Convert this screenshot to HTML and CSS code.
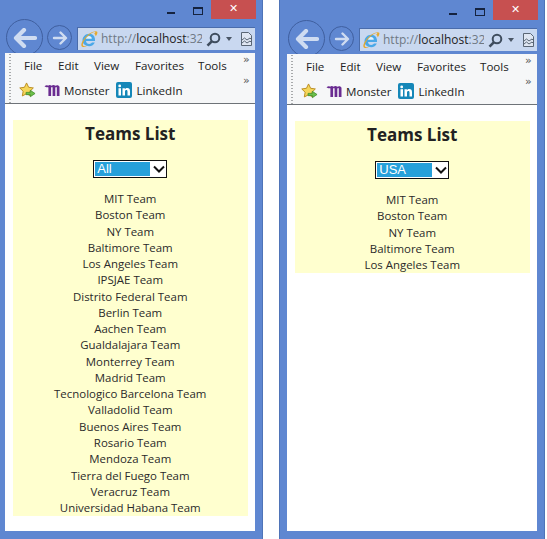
FILE: index.html
```
<!DOCTYPE html>
<html lang="en">
<head>
<meta charset="utf-8">
<title>Teams List</title>
<link rel="stylesheet" href="styles.css">
</head>
<body>
<svg class="defs" width="0" height="0" aria-hidden="true">
  <defs>
    <symbol id="ie" viewBox="0 0 18 18">
      <path d="M2.500 10.500C2.500 6.500 5.500 3.700 9.300 3.700c3.600 0 5.700 2.600 5.700 6v1.200H6c.2 1.900 1.500 3 3.200 3 1.300 0 2.200-.5 2.800-1.400h2.800c-.9 2.300-3 3.700-5.600 3.700-3.800 0-6.700-2.300-6.700-5.700z" fill="#4aa8e8"/>
      <path d="M6 8.700h5.800C11.700 7 10.600 6 9 6 7.400 6 6.200 7 6 8.700z" fill="#e4f3fc"/>
      <path d="M1.500 16C.3 13.400 5 6 10.500 3c3-1.600 5.800-2.500 6.700-1.300.6.900-.1 2.700-1.400 4.600-.3-1-.8-1.900-1.600-2.700 1-.9 1.400-1.400.9-1.600-1.100-.3-5 1.500-8.300 5C3.500 11 2.200 14.300 3.200 15.700c.7.900 2.700.4 4.600-.5-2 1.700-5.300 2.700-6.300.8z" fill="#e5a92e"/>
    </symbol>
    <symbol id="star" viewBox="0 0 18 18">
      <path d="M8 1l2.200 4.600 5 .7-3.600 3.500.9 5L8 12.400l-4.500 2.400.9-5L.8 6.300l5-.7z" fill="#f5d65a" stroke="#b98a1e"/>
      <path d="M7.500 11h4.500V8.800l5 3.400-5 3.400V13.400H7.500z" fill="#6cc04a" stroke="#3f8a2a" stroke-width=".8"/>
    </symbol>
    <symbol id="monster" viewBox="0 0 17 13">
      <path d="M.5 2.500C1.700 1.200 3 1 4 1.800 5 .9 6.500.8 7.500 1.800 8.700.8 10.300.8 11.300 1.800c1.200-1 3.700-1 4.200 1v9.200h-2.700V3.800c0-1-1.200-1-1.500 0V12H8.600V3.800c0-1-1.200-1-1.500 0V12H4.400V3.800c0-.8-.6-.9-1.100-.3z" fill="#6a2c91"/>
    </symbol>
    <symbol id="linkedin" viewBox="0 0 16 16">
      <rect width="16" height="16" rx="2" fill="#1587b8"/>
      <rect x="2.500" y="6.200" width="2.500" height="7.300" fill="#fff"/>
      <circle cx="3.700" cy="3.900" r="1.400" fill="#fff"/>
      <path d="M6.500 6.200h2.400v1.100c.5-.8 1.300-1.300 2.400-1.300 1.900 0 2.700 1.200 2.700 3.200v4.300h-2.500V9.700c0-1-.3-1.600-1.100-1.600-.9 0-1.400.6-1.400 1.700v3.700H6.500z" fill="#fff"/>
    </symbol>
    <symbol id="search" viewBox="0 0 15 15">
      <circle cx="9" cy="6" r="4.300" fill="none" stroke="#3f4d5e" stroke-width="2"/>
      <path d="M6 9.200 1.500 13.700" stroke="#3f4d5e" stroke-width="2.600"/>
    </symbol>
    <symbol id="compat" viewBox="0 0 11 14">
      <path d="M.5.500h7l3 3v10H.5z" fill="#dfe6f2" stroke="#5a6675"/>
      <path d="M1 8l2.500-2 2.500 2 3-2 1 1M1 11l2.500-2 2.500 2 3-2 1 1" fill="none" stroke="#5a6675"/>
    </symbol>
    <symbol id="back" viewBox="0 0 24 20">
      <path d="M11 2 3 10l8 8M3.500 10H22" fill="none" stroke="currentColor" stroke-width="4.200" stroke-linecap="round" stroke-linejoin="round"/>
    </symbol>
    <symbol id="forward" viewBox="0 0 16 14">
      <path d="M8.500 1.500 14 7l-5.500 5.500M13.500 7H2" fill="none" stroke="currentColor" stroke-width="2.400" stroke-linecap="round" stroke-linejoin="round"/>
    </symbol>
    <symbol id="chevron" viewBox="0 0 12 8">
      <path d="M1 1.500 6 6.500l5-5" fill="none" stroke="#111" stroke-width="2"/>
    </symbol>
  </defs>
</svg>

<section class="window window-all">
  <header class="titlebar">
    <span class="ctl-min"></span>
    <span class="ctl-max"></span>
    <span class="ctl-close">✕</span>
  </header>
  <div class="navbar">
    <span class="nav-back"><svg class="nav-back-icon"><use href="#back"/></svg></span>
    <span class="nav-forward"><svg class="nav-forward-icon"><use href="#forward"/></svg></span>
    <div class="address">
      <svg class="ie-icon"><use href="#ie"/></svg>
      <span class="url">http://<b class="host">localhost</b>:328</span>
      <svg class="search-icon"><use href="#search"/></svg>
      <span class="caret"></span>
      <svg class="compat-icon"><use href="#compat"/></svg>
    </div>
  </div>
  <div class="toolbars">
    <div class="toolbar-row menu-row">
      <span class="menu-item">File</span><span class="menu-item">Edit</span><span class="menu-item">View</span><span class="menu-item">Favorites</span><span class="menu-item">Tools</span>
      <span class="more">»</span>
    </div>
    <div class="toolbar-row fav-row">
      <svg class="star-icon"><use href="#star"/></svg>
      <svg class="monster-icon"><use href="#monster"/></svg><span class="fav-label">Monster</span>
      <svg class="linkedin-icon"><use href="#linkedin"/></svg><span class="fav-label">LinkedIn</span>
      <span class="more">»</span>
    </div>
  </div>
  <main class="client">
    <div class="panel">
      <h1 class="panel-title">Teams List</h1>
      <div class="picker"><span class="picker-value">All</span><svg class="chevron"><use href="#chevron"/></svg></div>
      <ul class="teams">
        <li>MIT Team</li><li>Boston Team</li><li>NY Team</li><li>Baltimore Team</li><li>Los Angeles Team</li><li>IPSJAE Team</li><li>Distrito Federal Team</li><li>Berlin Team</li><li>Aachen Team</li><li>Gualdalajara Team</li><li>Monterrey Team</li><li>Madrid Team</li><li>Tecnologico Barcelona Team</li><li>Valladolid Team</li><li>Buenos Aires Team</li><li>Rosario Team</li><li>Mendoza Team</li><li>Tierra del Fuego Team</li><li>Veracruz Team</li><li>Universidad Habana Team</li>
      </ul>
    </div>
  </main>
</section>

<section class="window window-usa">
  <header class="titlebar">
    <span class="ctl-min"></span>
    <span class="ctl-max"></span>
    <span class="ctl-close">✕</span>
  </header>
  <div class="navbar">
    <span class="nav-back"><svg class="nav-back-icon"><use href="#back"/></svg></span>
    <span class="nav-forward"><svg class="nav-forward-icon"><use href="#forward"/></svg></span>
    <div class="address">
      <svg class="ie-icon"><use href="#ie"/></svg>
      <span class="url">http://<b class="host">localhost</b>:328</span>
      <svg class="search-icon"><use href="#search"/></svg>
      <span class="caret"></span>
      <svg class="compat-icon"><use href="#compat"/></svg>
    </div>
  </div>
  <div class="toolbars">
    <div class="toolbar-row menu-row">
      <span class="menu-item">File</span><span class="menu-item">Edit</span><span class="menu-item">View</span><span class="menu-item">Favorites</span><span class="menu-item">Tools</span>
      <span class="more">»</span>
    </div>
    <div class="toolbar-row fav-row">
      <svg class="star-icon"><use href="#star"/></svg>
      <svg class="monster-icon"><use href="#monster"/></svg><span class="fav-label">Monster</span>
      <svg class="linkedin-icon"><use href="#linkedin"/></svg><span class="fav-label">LinkedIn</span>
      <span class="more">»</span>
    </div>
  </div>
  <main class="client">
    <div class="panel">
      <h1 class="panel-title">Teams List</h1>
      <div class="picker"><span class="picker-value">USA</span><svg class="chevron"><use href="#chevron"/></svg></div>
      <ul class="teams">
        <li>MIT Team</li><li>Boston Team</li><li>NY Team</li><li>Baltimore Team</li><li>Los Angeles Team</li>
      </ul>
    </div>
  </main>
</section>
</body>
</html>
```
FILE: styles.css
```
* { box-sizing: border-box; }
html, body { margin: 0; padding: 0; }
body {
  position: relative;
  width: 547px;
  height: 539px;
  overflow: hidden;
  background: #fff;
  font-family: "Open Sans", "Noto Sans", sans-serif;
  color: #222;
}
.defs { position: absolute; }

/* Windows sit on a free desktop canvas */
.window {
  position: absolute;
  width: 263px;
  display: flex;
  flex-direction: column;
  background: #5f87d1;
  border-right: 1px solid #4f74b8;
  padding: 0 7px 8px 5px;
}
.window-all { left: 0; top: -1px; height: 540px; }
.window-usa { left: 279px; top: 0; height: 539px; width: 266px; padding-left: 7px; padding-right: 7px; border-left: 1px solid #4f74b8; }

.titlebar {
  flex: none;
  height: 28px;
  display: flex;
  align-items: flex-start;
  justify-content: flex-end;
}
.ctl-min { width: 8px; height: 2px; margin: 13px 18px 0 0; background: #15233f; }
.ctl-max { width: 10px; height: 8px; margin: 8px 8px 0 0; border: 1px solid #15233f; border-top-width: 2px; }
.ctl-close {
  width: 45px; height: 20px;
  margin-right: -1px;
  background: #c75050;
  color: #fff;
  font: 700 11px/20px "DejaVu Sans", sans-serif;
  text-align: center;
}

.navbar {
  flex: none;
  height: 26px;
  display: flex;
  align-items: flex-start;
  position: relative;
}
.nav-back {
  flex: none;
  width: 37px; height: 37px;
  margin: -8px 0 0 1px;
  border-radius: 50%;
  border: 1px solid #3f5f9f;
  display: flex; align-items: center; justify-content: center;
  color: #cfdcf1;
}
.nav-back-icon { width: 24px; height: 20px; }
.nav-forward {
  flex: none;
  width: 25px; height: 25px;
  margin: -2px 0 0 4px;
  border-radius: 50%;
  border: 1px solid #3f5f9f;
  display: flex; align-items: center; justify-content: center;
  color: #cfdcf1;
}
.nav-forward-icon { width: 16px; height: 14px; }
.address {
  flex: none;
  width: 178px; height: 23px;
  margin-left: 5px;
  display: flex;
  align-items: center;
  background: #c9d8f0;
  border-top: 1px solid #4a6cab;
  border-left: 1px solid #4a6cab;
  overflow: hidden;
}
.ie-icon { flex: none; width: 18px; height: 18px; margin-left: 2px; }
.url {
  flex: none;
  width: 101px;
  margin-left: 3px;
  overflow: hidden;
  white-space: nowrap;
  font-size: 12px;
  line-height: 18px;
  color: #6f7884;
}
.host { font-weight: 400; color: #222; }
.search-icon { flex: none; width: 15px; height: 15px; margin-left: 4px; }
.caret {
  flex: none;
  width: 0; height: 0;
  margin-left: 5px;
  border-left: 3.5px solid transparent;
  border-right: 3.5px solid transparent;
  border-top: 4px solid #4a5666;
}
.compat-icon { flex: none; width: 11px; height: 14px; margin-left: 9px; }

.toolbars {
  flex: none;
  height: 51px;
  background: #f6f7f8;
  border-bottom: 1px solid #6e7378;
  padding-left: 4px;
  position: relative;
  background-image: radial-gradient(#a8aaac 0.6px, transparent 0.7px);
  background-size: 2px 3px;
  background-repeat: repeat-y;
  background-position: 4px 0;
}
.toolbar-row {
  display: flex;
  align-items: center;
  font-size: 11.6px;
  position: relative;
}
.menu-row { height: 24px; padding: 0 0 0 15px; }
.fav-row { height: 26px; padding: 0 0 0 10px; }
.menu-item { flex: none; }
.menu-item:nth-child(1) { width: 34px; }
.menu-item:nth-child(2) { width: 36px; }
.menu-item:nth-child(3) { width: 41px; }
.menu-item:nth-child(4) { width: 63px; }
.more {
  position: absolute;
  left: 234px;
  top: 0;
  font: 11px/14px "DejaVu Sans", sans-serif;
  color: #555;
}
.fav-row .more { top: -3px; }
.star-icon { flex: none; width: 17px; height: 17px; margin-right: 8px; }
.monster-icon { flex: none; width: 17px; height: 13px; margin-right: 3px; }
.fav-label { flex: none; margin-right: 7px; }
.linkedin-icon { flex: none; width: 16px; height: 16px; margin-right: 4px; }

.client {
  flex: 1;
  background: #fff;
  padding: 16px 7px 0 7.5px;
}
.panel {
  background: #ffffcf;
  text-align: center;
}
.panel-title {
  margin: 0;
  padding-top: 2px;
  font-size: 17px;
  line-height: 24px;
  font-weight: 700;
  color: #222;
}
.picker {
  display: flex;
  width: 74px;
  height: 18px;
  margin: 14px auto 13px;
  background: #fff;
  border: 1px solid #111;
  padding: 1px;
  align-items: stretch;
}
.picker-value {
  width: 55px;
  background: #26a0da;
  color: #fff;
  font: 13px/14px "Liberation Sans", sans-serif;
  text-align: left;
  padding-left: 2px;
}
.chevron { width: 12px; height: 8px; margin: 3px 0 0 3px; }
.teams { list-style: none; margin: 0; padding: 0; font-size: 11.45px; line-height: 16.26px; color: #2a2a2a; }
```
